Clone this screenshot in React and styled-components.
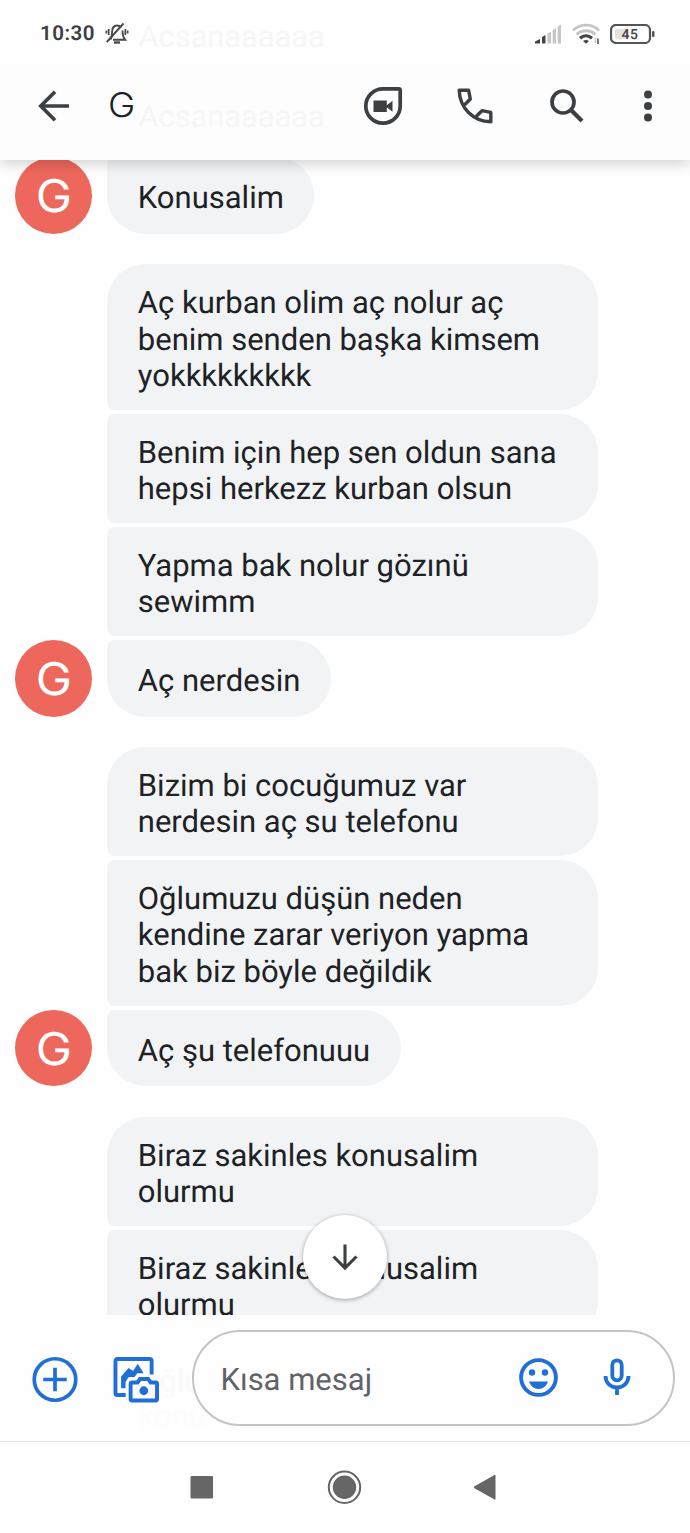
import styled, { createGlobalStyle } from "styled-components";

const GlobalStyle = createGlobalStyle`
  * {
    box-sizing: border-box;
  }
  body {
    margin: 0;
    background-color: #fefefe;
    font-family: Roboto, "Liberation Sans", sans-serif;
    text-rendering: geometricPrecision;
  }
`;

const Screen = styled.div`
  display: flex;
  flex-direction: column;
  width: 690px;
  height: 1533px;
  overflow: hidden;
  background-color: #fefefe;
`;

const Top = styled.header`
  position: relative;
  z-index: 2;
  flex: none;
  height: 160px;
  background-color: #fdfdfd;
  box-shadow: 0 3px 14px rgba(0, 0, 0, 0.2);
`;

const StatusBar = styled.div`
  display: flex;
  align-items: center;
  height: 64px;
  padding: 3px 35px 0 40px;
  background-color: #fefefe;
`;

const Clock = styled.span`
  width: 65px;
  font-size: 20.5px;
  font-weight: 600;
  line-height: 24px;
  letter-spacing: 0.5px;
  color: #3d3d3d;
`;

const StatusIcons = styled.div`
  display: flex;
  align-items: center;
  gap: 10px;
  margin-left: auto;
`;

const Toolbar = styled.div`
  display: flex;
  align-items: center;
  height: 96px;
  padding: 0 23px 12px 35px;
`;

const ContactName = styled.h1`
  flex: 1;
  margin: 0 0 0 35.5px;
  font-family: Inter, sans-serif;
  font-size: 34px;
  font-weight: 300;
  line-height: 40px;
  color: #202124;
`;

/* the contact initial is drawn a little wider than the face */
const Initial = styled.span`
  display: inline-block;
  transform: scaleX(1.08);
`;

const IconButton = styled.button`
  display: flex;
  align-items: center;
  justify-content: center;
  flex: none;
  width: ${(props) => props.$width || "46px"};
  height: 46px;
  margin: 0 0 0 ${(props) => props.$left || "0"};
  padding: 0 0 ${(props) => props.$lift || "0"};
  border: none;
  background: none;
  color: ${(props) => props.$color || "#3c4043"};
`;

const Ghost = styled.span`
  position: absolute;
  left: 138.5px;
  top: ${(props) => props.$top};
  font-size: 30.8px;
  line-height: 36px;
  color: ${(props) => props.$color || "#f6f6f6"};
`;

const Thread = styled.main`
  display: flex;
  flex-direction: column;
  gap: 30.8px;
  flex: none;
  height: 1154.5px;
  overflow: hidden;
`;

const Group = styled.section`
  display: flex;
  flex-direction: column;
  gap: 4.1px;
  flex: none;
  margin-top: ${(props) => props.$top || "0"};
`;

const Row = styled.div`
  display: flex;
  align-items: flex-end;
  gap: 15.3px;
  padding-left: 15px;
`;

const Avatar = styled.div`
  display: flex;
  align-items: center;
  justify-content: center;
  width: 77px;
  height: 76.7px;
  padding-left: 1.5px;
  border-radius: 50%;
  font-family: Inter, sans-serif;
  font-size: 45px;
  font-weight: 400;
  color: #ffffff;
  background-color: ${(props) => (props.$empty ? "transparent" : "#ee675c")};
`;

const Bubble = styled.p`
  display: flex;
  align-items: center;
  width: ${(props) => (props.$last ? "auto" : "491px")};
  min-height: 76.7px;
  margin: 0;
  padding: 20.6px 30.5px 15.4px;
  border-radius: ${(props) => (props.$first ? "38px" : "8px")} 38px 38px
    ${(props) => (props.$last ? "38px" : "8px")};
  font-size: 31px;
  line-height: 36.45px;
  white-space: pre;
  color: #202124;
  background-color: #f1f3f5;
`;

const ScrollDown = styled.button`
  position: absolute;
  left: 303px;
  top: 1215px;
  z-index: 3;
  display: flex;
  align-items: center;
  justify-content: center;
  width: 84px;
  height: 84px;
  padding: 0;
  border: none;
  border-radius: 50%;
  color: #3c4043;
  background-color: #ffffff;
  box-shadow: 0 1px 4px rgba(0, 0, 0, 0.35);
`;

const Composer = styled.footer`
  position: relative;
  display: flex;
  align-items: flex-start;
  flex: none;
  height: 127px;
  padding: 15.5px 15px 0 32px;
  border-bottom: 1px solid #e0e0e0;
`;

const Tools = styled.div`
  z-index: 1;
  display: flex;
  align-items: center;
  gap: 34.5px;
  height: 98px;
  width: 159.5px;
`;

const Field = styled.div`
  z-index: 1;
  display: flex;
  align-items: center;
  flex: 1;
  height: 96px;
  padding: 0 33px 0 27px;
  border: 2px solid #c4c4c4;
  border-radius: 48px;
  background-color: #fefefe;
`;

const Placeholder = styled.span`
  flex: 1;
  padding-top: 3px;
  font-size: 31px;
  line-height: 36px;
  color: #5f6368;
`;

const NavBar = styled.nav`
  display: flex;
  align-items: center;
  flex: 1;
  padding-left: 190px;
`;

const groups = [
  [["Konusalim"]],
  [
    ["Aç kurban olim aç nolur aç", "benim senden başka kimsem", "yokkkkkkkkk"],
    ["Benim için hep sen oldun sana", "hepsi herkezz kurban olsun"],
    ["Yapma bak nolur gözınü", "sewimm"],
    ["Aç nerdesin"],
  ],
  [
    ["Bizim bi cocuğumuz var", "nerdesin aç su telefonu"],
    ["Oğlumuzu düşün neden", "kendine zarar veriyon yapma", "bak biz böyle değildik"],
    ["Aç şu telefonuuu"],
  ],
  [
    ["Biraz sakinles konusalim", "olurmu"],
    ["Biraz sakinles konusalim", "olurmu"],
  ],
];

const MutedBell = () => (
  <svg width="24" height="24" viewBox="0 0 24 24" fill="none" stroke="#4a4a4a" strokeWidth="1.9">
    <path d="M5.500 17.500c1-1.500 1.500-3 1.500-6.500 0-5 2.200-7.500 5-7.500 1.800 0 3.200.7 4 2" />
    <path d="M17.500 8.500c0 4.500.3 6.500 2.700 9.300H8M1.800 20 18.500 1.500" />
    <path d="M9 20.500h6" strokeWidth="2.400" />
    <path d="M3.700 7v6M1.400 8.500v3M20.300 7v6M22.600 8.500v3" strokeWidth="1.700" />
  </svg>
);

const Signal = () => (
  <svg width="27" height="20" viewBox="0 0 27 20">
    <path d="M0 19.500v-2L5 15v4.500zM7 19.500V13l3.500-2v8.500z" fill="#444" />
    <path d="M12.500 19.500V9.500L16 7.500v12zM17.700 19.500V6l3.300-2v15.500zM22.700 19.500V2.500l3.300-2v19z" fill="#c6c6c6" />
  </svg>
);

const Wifi = () => (
  <svg width="28" height="21" viewBox="0 0 28 21" fill="none" strokeWidth="2.800">
    <path d="M1 7.500C8 .3 20 .3 27 7.500" stroke="#c6c6c6" />
    <path d="M4.500 11.500c5.500-5 13.500-5 19 0" stroke="#c6c6c6" />
    <path d="M8 15.300c3.700-3.400 8.300-3.400 12 0" stroke="#444" strokeWidth="3.200" />
    <path d="M11 18q3-2.200 6 0l-3 2.800z" fill="#444" />
    <path d="M23.500 15v5" stroke="#c6c6c6" strokeWidth="1.500" />
    <path d="M26 15.500V21" stroke="#555" strokeWidth="1.600" />
  </svg>
);

const Battery = () => (
  <svg width="45" height="20" viewBox="0 0 45 20">
    <rect x="1" y="1" width="39" height="18" rx="5" fill="none" stroke="#555" strokeWidth="2.200" />
    <rect x="5" y="5" width="14" height="10" rx="2" fill="#e2e2e2" />
    <rect x="42" y="7" width="2.500" height="6" rx="1" fill="#555" />
    <text x="20" y="14.900" textAnchor="middle" fontFamily="Roboto" fontSize="14" fontWeight="500" letterSpacing="0.600" fill="#444">45</text>
  </svg>
);

const BackIcon = () => (
  <svg width="32" height="32" viewBox="0 0 32 32" fill="none" stroke="currentColor" strokeWidth="3.700">
    <path d="M31 16H3M17 1.800 2.800 16 17 30.200" />
  </svg>
);

const DuoIcon = () => (
  <svg width="40" height="40" viewBox="0 0 40 40">
    <path
      d="M20 2.800h15.700a1.500 1.500 0 0 1 1.500 1.500V20A17.200 17.200 0 1 1 20 2.800z"
      fill="none"
      stroke="currentColor"
      strokeWidth="3.700"
    />
    <path d="M10.500 14.500h13.300v11.500H10.500zM22.500 20.200l7-5.500v11z" fill="currentColor" />
  </svg>
);

const PhoneIcon = () => (
  <svg width="36" height="36" viewBox="0 0 36 36" fill="none" stroke="currentColor" strokeWidth="3.400" strokeLinejoin="round">
    <path d="M7.700 16.700 13.300 11 11.600 2.200H2.200C2.700 20 16 33.300 33.800 33.800v-9.400L25 22.700l-5.700 5.600" />
  </svg>
);

const SearchIcon = () => (
  <svg width="34" height="34" viewBox="0 0 34 34" fill="none" stroke="currentColor">
    <circle cx="13" cy="13" r="11" strokeWidth="3.700" />
    <path d="m21 21 11 11" strokeWidth="4.200" />
  </svg>
);

const MoreIcon = () => (
  <svg width="8" height="32" viewBox="0 0 8 32" fill="currentColor">
    <circle cx="4" cy="4.500" r="4" />
    <circle cx="4" cy="16" r="4" />
    <circle cx="4" cy="27.500" r="4" />
  </svg>
);

const PlusIcon = () => (
  <svg width="47" height="47" viewBox="0 0 47 47" fill="none" stroke="currentColor" strokeWidth="3.800">
    <circle cx="23.500" cy="23.500" r="21.200" />
    <path d="M23.500 11.500v24M11.500 23.500h24" />
  </svg>
);

const GalleryIcon = () => (
  <svg width="47" height="47" viewBox="0 0 47 47" fill="none" stroke="currentColor" strokeWidth="4">
    <path d="M13 39.300H4.500a2 2 0 0 1-2-2V4.500a2 2 0 0 1 2-2h33a2 2 0 0 1 2 2V18.500" />
    <path d="M8.300 32.500V20.500l7.700-8.700 4.500 3L25.300 7.500l6 9.500h-6.500L22 21h-6l-3.200 5v6.500z" fill="currentColor" stroke="none" />
    <path d="M19.500 26.500h5.500l2.500-3.500h8.500l2.500 3.500h5a1.500 1.500 0 0 1 1.500 1.500v15.500a1.500 1.500 0 0 1-1.500 1.500h-24a1.500 1.500 0 0 1-1.500-1.500V28a1.500 1.500 0 0 1 1.500-1.500z" />
    <circle cx="31.500" cy="35" r="4.500" fill="currentColor" stroke="none" />
  </svg>
);

const SmileIcon = () => (
  <svg width="39" height="39" viewBox="0 0 39 39" fill="currentColor">
    <circle cx="19.500" cy="19.500" r="17.400" fill="none" stroke="currentColor" strokeWidth="3.900" />
    <circle cx="13" cy="14.500" r="3.200" />
    <circle cx="26" cy="14.500" r="3.200" />
    <path d="M10 23.500h19c-1.500 4.500-5 7.500-9.500 7.500s-8-3-9.500-7.500z" />
  </svg>
);

const MicIcon = () => (
  <svg width="28" height="38" viewBox="0 0 28 38" fill="none" stroke="currentColor" strokeWidth="3.800">
    <rect x="9.300" y="2.300" width="9.400" height="20" rx="4.700" />
    <path d="M2.500 18c0 7 5.300 11.500 11.500 11.500S25.500 25 25.500 18M14 29.500V37" />
  </svg>
);

const DownIcon = () => (
  <svg width="28" height="28" viewBox="0 0 28 28" fill="none" stroke="currentColor" strokeWidth="3.100">
    <path d="M14 1.500v24M2.500 13.500 14 25l11.500-11.500" />
  </svg>
);

const NavIcons = () => (
  <svg width="310" height="36" viewBox="0 0 310 36" fill="#666">
    <rect x="0.500" y="7" width="22.500" height="22.500" rx="1" />
    <circle cx="154.500" cy="18.300" r="11.700" />
    <circle cx="154.500" cy="18.300" r="15.700" fill="none" stroke="#666" strokeWidth="2" />
    <path d="M304.500 6q1-.5 1 .8v23q0 1.300-1 .8l-20-11.400q-1.500-1 0-2z" />
  </svg>
);

const App = () => (
  <>
    <GlobalStyle />
    <Screen>
      <Top>
        <Ghost $top="19px">Acsanaaaaaa</Ghost>
        <Ghost $top="99px">Acsanaaaaaa</Ghost>
        <StatusBar>
          <Clock>10:30</Clock>
          <MutedBell />
          <StatusIcons>
            <Signal />
            <Wifi />
            <Battery />
          </StatusIcons>
        </StatusBar>
        <Toolbar>
          <IconButton $width="38px"><BackIcon /></IconButton>
          <ContactName><Initial>G</Initial></ContactName>
          <IconButton><DuoIcon /></IconButton>
          <IconButton $left="46px"><PhoneIcon /></IconButton>
          <IconButton $left="46px"><SearchIcon /></IconButton>
          <IconButton $left="39px" $width="38px"><MoreIcon /></IconButton>
        </Toolbar>
      </Top>
      <Thread>
        {groups.map((messages, g) => (
          <Group key={g} $top={g === 0 ? "-3px" : "0"}>
            {messages.map((lines, i) => {
              const single = lines.length === 1;
              return (
                <Row key={i}>
                  <Avatar $empty={!single}>{single && <Initial>G</Initial>}</Avatar>
                  <Bubble $first={i === 0 && g !== 0} $last={single}>
                    {lines.join("\n")}
                  </Bubble>
                </Row>
              );
            })}
          </Group>
        ))}
      </Thread>
      <ScrollDown><DownIcon /></ScrollDown>
      <Composer>
        <Ghost $top="48px" $color="#fafafa">Oğlu</Ghost>
        <Ghost $top="84px" $color="#fcfcfc">konu</Ghost>
        <Tools>
          <IconButton $color="#1f6fd6"><PlusIcon /></IconButton>
          <IconButton $color="#1f6fd6"><GalleryIcon /></IconButton>
        </Tools>
        <Field>
          <Placeholder>Kısa mesaj</Placeholder>
          <IconButton $color="#1f6fd6" $lift="1px"><SmileIcon /></IconButton>
          <IconButton $color="#1f6fd6" $left="33px" $lift="3px"><MicIcon /></IconButton>
        </Field>
      </Composer>
      <NavBar><NavIcons /></NavBar>
    </Screen>
  </>
);

export default App;
